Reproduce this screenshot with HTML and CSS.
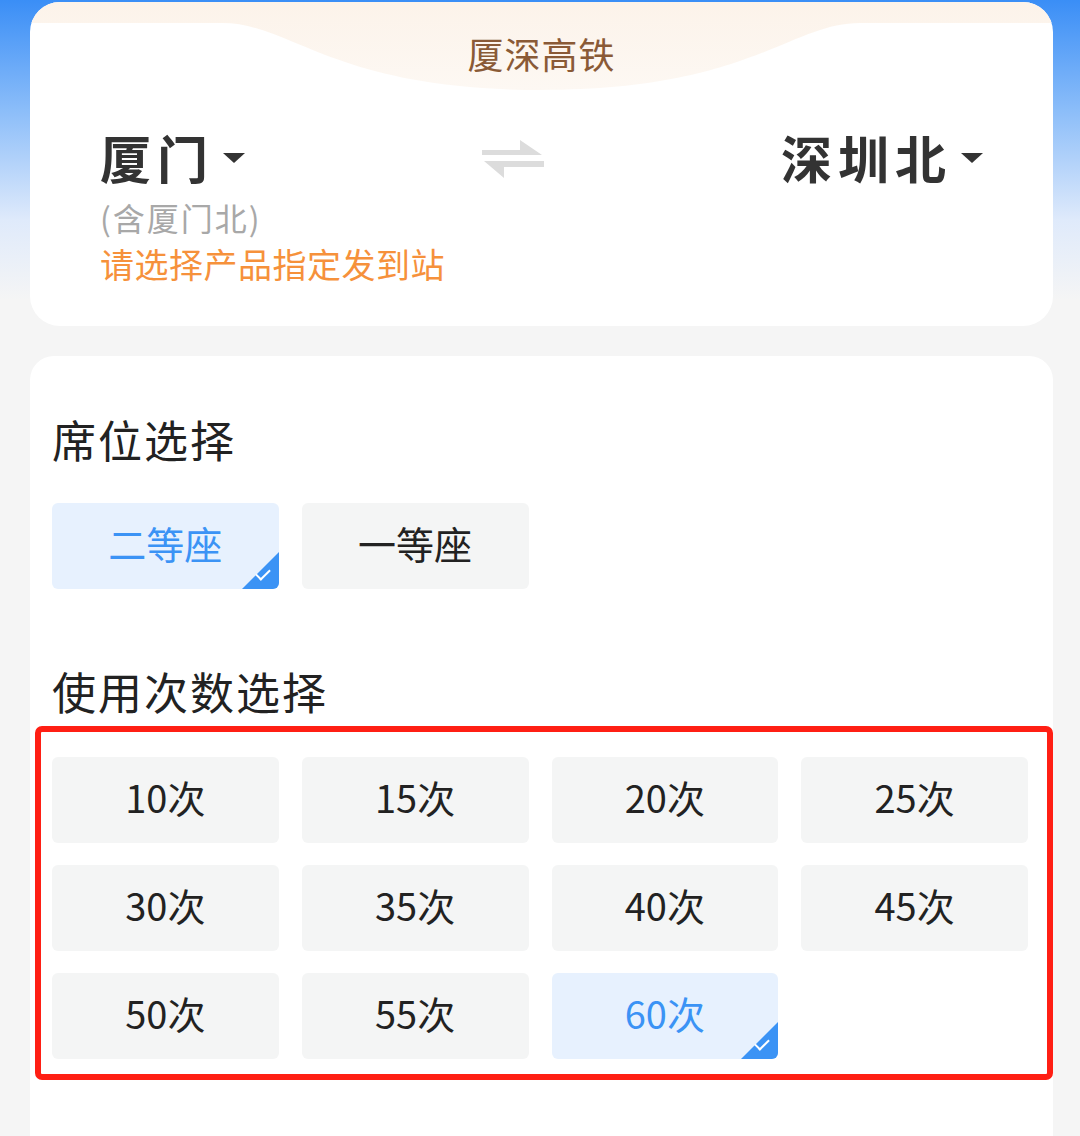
FILE: index.html
```html
<!DOCTYPE html>
<html lang="zh-CN">
<head>
    <meta charset="UTF-8">
    <meta name="viewport" content="width=device-width, initial-scale=1.0">
    <title>厦深高铁</title>
    <link rel="stylesheet" href="styles.css">
</head>
<body>

<!-- Tarjeta de ruta -->
<div class="card route-card">
    <svg class="route-tab" width="1023" height="100" viewBox="0 0 1023 100">
        <defs>
            <linearGradient id="tabFill" x1="0" y1="0" x2="0" y2="1">
                <stop offset="0" stop-color="#fcf3ea"/>
                <stop offset="1" stop-color="#fdf8f3"/>
            </linearGradient>
        </defs>
        <path d="M0 0 H1023 V21 H830 C 760 21, 720 88, 511 88 C 302 88, 262 21, 192 21 H0 Z" fill="url(#tabFill)"/>
    </svg>

    <div class="route-title">厦深高铁</div>

    <div class="station-row">
        <div class="station">厦门<span class="caret"></span></div>
        <svg class="swap" width="62" height="42" viewBox="0 0 62 42">
            <polygon points="0,12 38,12 38,2 60,17 0,17" fill="#dcdcdc"/>
            <polygon points="2,23 62,23 62,29 22,29 22,40" fill="#dcdcdc"/>
        </svg>
        <div class="station">深圳北<span class="caret"></span></div>
    </div>
    <div class="station-note">(含厦门北)</div>
    <div class="station-tip">请选择产品指定发到站</div>
</div>

<!-- Tarjeta de opciones -->
<div class="card option-card">
    <h3 class="section-title">席位选择</h3>
    <div class="option-grid">
        <div class="option selected">二等座</div>
        <div class="option">一等座</div>
    </div>

    <h3 class="section-title times-title">使用次数选择</h3>
    <div class="option-grid times-grid">
        <div class="option">10次</div>
        <div class="option">15次</div>
        <div class="option">20次</div>
        <div class="option">25次</div>
        <div class="option">30次</div>
        <div class="option">35次</div>
        <div class="option">40次</div>
        <div class="option">45次</div>
        <div class="option">50次</div>
        <div class="option">55次</div>
        <div class="option selected">60次</div>
    </div>

    <!-- Marco rojo de anotación -->
    <div class="highlight-box"></div>
</div>

</body>
</html>
```

FILE: styles.css
```css
body {
    margin: 0;
    font-family: 'Noto Sans CJK SC', 'Noto Sans', sans-serif;
    background: linear-gradient(#3a8ef6 0, #8bbdf9 110px, #dfeafb 220px, #f5f5f5 300px, #f5f5f5 100%);
    color: #222;
    min-height: 1136px;
    box-sizing: border-box;
    padding-top: 2px;
    border-bottom: 2px solid #b4b4b4;
    overflow: hidden;
}
.card {
    margin: 0 27px 0 30px;
    background-color: #fff;
    border-radius: 30px;
    position: relative;
}

/* Tarjeta de ruta */
.route-card {
    height: 324px;
    overflow: hidden;
    padding: 0 70px;
    box-sizing: border-box;
}
.route-tab {
    position: absolute;
    top: 0;
    left: 0;
}
.route-title {
    position: relative;
    padding-top: 31px;
    height: 40px;
    line-height: 40px;
    text-align: center;
    font-size: 36px;
    letter-spacing: 1px;
    color: #8a5a36;
}
.station-row {
    position: relative;
    margin-top: 54px;
    height: 60px;
    display: flex;
    justify-content: space-between;
    align-items: center;
}
.station {
    display: flex;
    align-items: center;
    margin-top: -1px;
    font-size: 51px;
    font-weight: bold;
    line-height: 60px;
    color: #333;
    letter-spacing: 6px;
}
.caret {
    width: 0;
    height: 0;
    margin-left: 9px;
    margin-top: 2px;
    border-left: 11px solid transparent;
    border-right: 11px solid transparent;
    border-top: 10px solid #333;
}
.swap {
    margin-top: 4px;
}
.station-note {
    margin-top: 10px;
    line-height: 40px;
    font-size: 32px;
    letter-spacing: 2px;
    color: #a8a8a8;
}
.station-tip {
    margin-top: 7px;
    line-height: 40px;
    font-size: 34px;
    letter-spacing: 0.5px;
    color: #f6913b;
}

/* Tarjeta de opciones */
.option-card {
    margin-top: 30px;
    padding: 53px 25px 120px 22px;
    border-radius: 24px 24px 0 0;
}
.section-title {
    margin: 0;
    line-height: 60px;
    font-size: 44px;
    font-weight: normal;
    letter-spacing: 2px;
    color: #222;
}
.option-grid {
    margin-top: 34px;
    display: grid;
    grid-template-columns: repeat(4, 1fr);
    column-gap: 23px;
    row-gap: 22px;
}
.times-title {
    margin-top: 72px;
}
.times-grid {
    margin-top: 36px;
}
.option {
    position: relative;
    height: 86px;
    line-height: 80px;
    text-align: center;
    font-size: 38px;
    color: #222;
    background-color: #f4f5f5;
    border-radius: 6px;
    overflow: hidden;
}
.option.selected {
    background-color: #e7f1fe;
    color: #3b93f5;
}
.option.selected::after {
    content: '';
    position: absolute;
    right: 0;
    bottom: 0;
    width: 0;
    height: 0;
    border-left: 37px solid transparent;
    border-bottom: 37px solid #3b93f5;
}
.option.selected::before {
    content: '';
    position: absolute;
    right: 9px;
    bottom: 12px;
    width: 12px;
    height: 6px;
    border-left: 2px solid #fff;
    border-bottom: 2px solid #fff;
    transform: rotate(-45deg);
    z-index: 1;
}
.highlight-box {
    position: absolute;
    left: 5px;
    top: 370px;
    width: 1018px;
    height: 354px;
    box-sizing: border-box;
    border: 6px solid #ff1f14;
    border-radius: 7px;
}
```
